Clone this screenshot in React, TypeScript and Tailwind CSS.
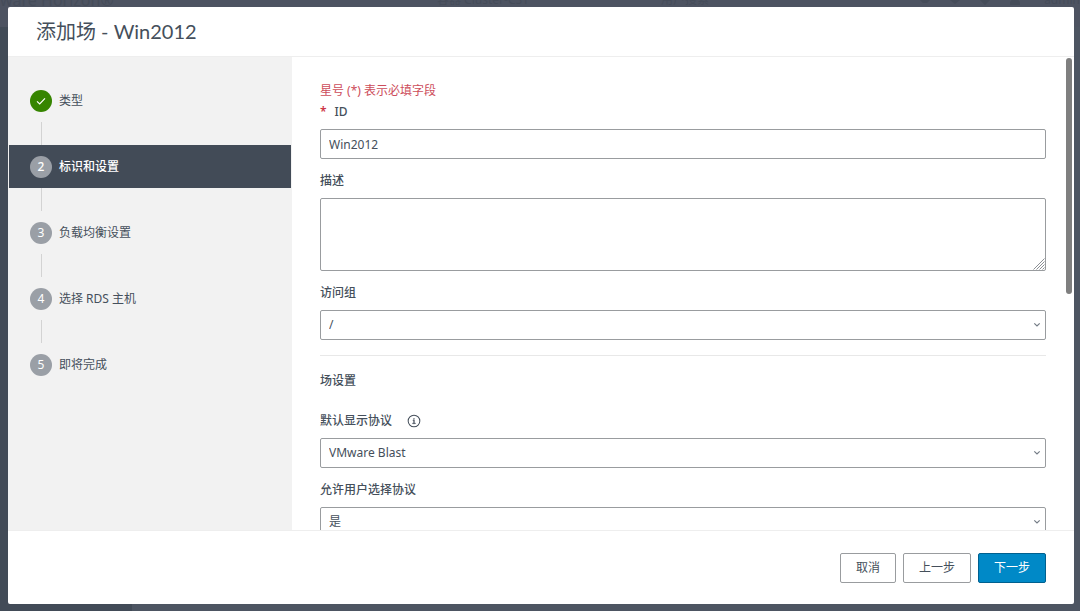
import { useState } from "react"
import type { ReactNode } from "react"

const steps = ["类型", "标识和设置", "负载均衡设置", "选择 RDS 主机", "即将完成"]

const fieldClass =
	"block w-full rounded-[2px] border border-[#999c9f] bg-white px-2 text-xs text-[#454f5b] outline-none focus:border-[#0079b8]"

interface FieldProps {
	id: string
	label: string
	children: ReactNode
	hint?: ReactNode
}

function Field({ id, label, children, hint }: FieldProps) {
	return (
		<div>
			<div className="mb-[7px] flex h-5 items-center gap-[15px]">
				<label htmlFor={id} className="text-xs font-medium">
					{label}
				</label>
				{hint}
			</div>
			{children}
		</div>
	)
}

function Select({ id, options }: { id: string; options: string[] }) {
	return (
		<div className="relative">
			<select id={id} className={`${fieldClass} h-[30px] appearance-none pr-6`}>
				{options.map((option) => (
					<option key={option}>{option}</option>
				))}
			</select>
			<svg
				viewBox="0 0 8 6"
				className="pointer-events-none absolute top-3 right-[5px] h-[6px] w-2"
				fill="none"
				stroke="#737b85"
				strokeWidth="1.2"
			>
				<path d="M1.3 1.4 4 4 6.7 1.4" />
			</svg>
		</div>
	)
}

function InfoIcon() {
	return (
		<svg viewBox="0 0 36 36" className="size-[14px]" fill="currentColor" aria-hidden="true">
			<circle cx="17.93" cy="11.9" r="1.6" />
			<path d="M21 23h-2v-8h-3a1 1 0 0 0 0 2h1v6h-2a1 1 0 1 0 0 2h6a1 1 0 0 0 0-2Z" stroke="currentColor" />
			<circle cx="18" cy="18" r="15" fill="none" stroke="currentColor" strokeWidth="2.6" />
		</svg>
	)
}

// Dimmed console page behind the modal
function Backdrop() {
	return (
		<div aria-hidden="true" className="absolute inset-0 flex flex-col overflow-hidden bg-[#4d5562] text-[#454c59]">
			<div className="flex h-[27px] shrink-0 bg-[#4d5361]">
				<span className="-mt-3 w-[437px] shrink-0 text-base leading-6">ware Horizon®</span>
				<span className="-mt-2 w-[224px] shrink-0 text-xs">容器 Cluster-CS1</span>
				<span className="-mt-2 flex-1 text-xs">用户搜索</span>
				<svg viewBox="0 0 140 8" className="mr-4 h-2 w-[140px]" fill="currentColor">
					<path d="M32 0h10l-3 3h-4zM62 0h10l-5 4zM92 0h10l-5 5zM122 3a5 4 0 0 1 10 0v2h-10z" />
				</svg>
				<span className="-mt-2 text-xs">admin</span>
			</div>
			<div className="w-[132px] flex-1 bg-[#424b57]" />
		</div>
	)
}

function StepNav({ current, onSelect }: { current: number; onSelect: (index: number) => void }) {
	return (
		<nav className="w-[284px] shrink-0 bg-[#f2f2f2] px-px pt-[22px]">
			<ol>
				{steps.map((step, index) => (
					<li key={step}>
						{index > 0 && <div className="ml-8 h-[23px] w-px bg-[#d3d3d3]" />}
						<button
							type="button"
							onClick={() => onSelect(index)}
							aria-current={index === current ? "step" : undefined}
							className={`flex h-[43px] w-full items-center gap-[7px] px-[21px] text-xs ${
								index === current ? "bg-[#424b57] font-medium text-white" : "text-[#454f5b]"
							}`}
						>
							<span
								className={`flex size-[22px] items-center justify-center rounded-full text-white ${
									index < current ? "bg-[#368500]" : "bg-[#9a9fa6]"
								}`}
							>
								{index < current ? (
									<svg viewBox="0 0 12 12" className="size-3" fill="none" stroke="white" strokeWidth="1.2">
										<path d="M2 6.4 4.7 8.9 10 3.4" />
									</svg>
								) : (
									index + 1
								)}
							</span>
							{step}
						</button>
					</li>
				))}
			</ol>
		</nav>
	)
}

export default function App() {
	const [current, setCurrent] = useState(1)
	const [name, setName] = useState("Win2012")

	return (
		<div className="relative flex h-screen py-[7px] pr-[6px] pl-2 font-['Noto_Sans','Noto_Sans_CJK_SC',sans-serif] text-[#454f5b]">
			<Backdrop />
			<div
				role="dialog"
				aria-labelledby="dialog-title"
				className="relative flex min-h-0 min-w-0 flex-1 flex-col overflow-hidden rounded-[2px] bg-white"
			>
				<header className="flex h-[50px] shrink-0 items-center border-b border-[#eeeeee] px-7 pb-[2px]">
					<h1
						id="dialog-title"
						className="font-['Lato','Noto_Sans_CJK_SC',sans-serif] text-xl font-normal text-[#454f5b]"
					>
						添加场 - Win2012
					</h1>
				</header>

				<div className="flex min-h-0 flex-1">
					<StepNav current={current} onSelect={setCurrent} />

					<main className="relative min-w-0 flex-1 overflow-hidden px-7 pt-6">
						<p className="h-[21px] text-xs leading-5 text-[#cd4d5b]">星号 (*) 表示必填字段</p>
						<div className="flex flex-col gap-3">
							<div>
								<div className="mb-[7px] flex h-5 items-center gap-2 text-xs">
									<span className="font-semibold text-[#cd3545]">*</span>
									<label htmlFor="farm-id" className="font-medium">
										ID
									</label>
								</div>
								<input
									id="farm-id"
									value={name}
									onChange={(e) => setName(e.target.value)}
									className={`${fieldClass} h-[30px]`}
								/>
							</div>
							<Field id="description" label="描述">
								<div className="relative">
									<textarea
										id="description"
										className={`${fieldClass} h-[73px] resize-y [&::-webkit-resizer]:hidden`}
									/>
									<svg
										viewBox="0 0 12 12"
										className="pointer-events-none absolute right-px bottom-px size-3"
										stroke="#8c9095"
										strokeWidth="1"
									>
										<path d="M0.5 11.5 11.5 0.5M3.5 11.5 11.5 3.5M6.5 11.5 11.5 6.5M9.5 11.5 11.5 9.5" />
									</svg>
								</div>
							</Field>
							<Field id="access-group" label="访问组">
								<Select id="access-group" options={["/"]} />
							</Field>
						</div>

						<hr className="my-[15px] border-[#e8e8e8]" />
						<h2 className="mb-5 text-xs leading-5 font-medium">场设置</h2>

						<div className="flex flex-col gap-3">
							<Field id="protocol" label="默认显示协议" hint={<InfoIcon />}>
								<Select id="protocol" options={["VMware Blast", "PCoIP", "Microsoft RDP"]} />
							</Field>
							<Field id="allow-choice" label="允许用户选择协议">
								<Select id="allow-choice" options={["是", "否"]} />
							</Field>
						</div>

						<div className="absolute top-px right-[2px] h-[236px] w-[6px] rounded-full bg-[#7f7f7f]" />
					</main>
				</div>

				<footer className="flex h-[74px] shrink-0 items-center justify-end gap-[7px] border-t border-[#eeeeee] pr-7 text-xs">
					<button type="button" className="h-[30px] rounded-[2px] border border-[#999c9f] px-[15px]">
						取消
					</button>
					<button
						type="button"
						onClick={() => setCurrent(Math.max(0, current - 1))}
						className="h-[30px] rounded-[2px] border border-[#999c9f] px-[15px]"
					>
						上一步
					</button>
					<button
						type="button"
						onClick={() => setCurrent(Math.min(steps.length - 1, current + 1))}
						className="h-[30px] rounded-[2px] border border-[#00608f] bg-[#0089c7] px-[15px] text-white"
					>
						下一步
					</button>
				</footer>
			</div>
		</div>
	)
}
